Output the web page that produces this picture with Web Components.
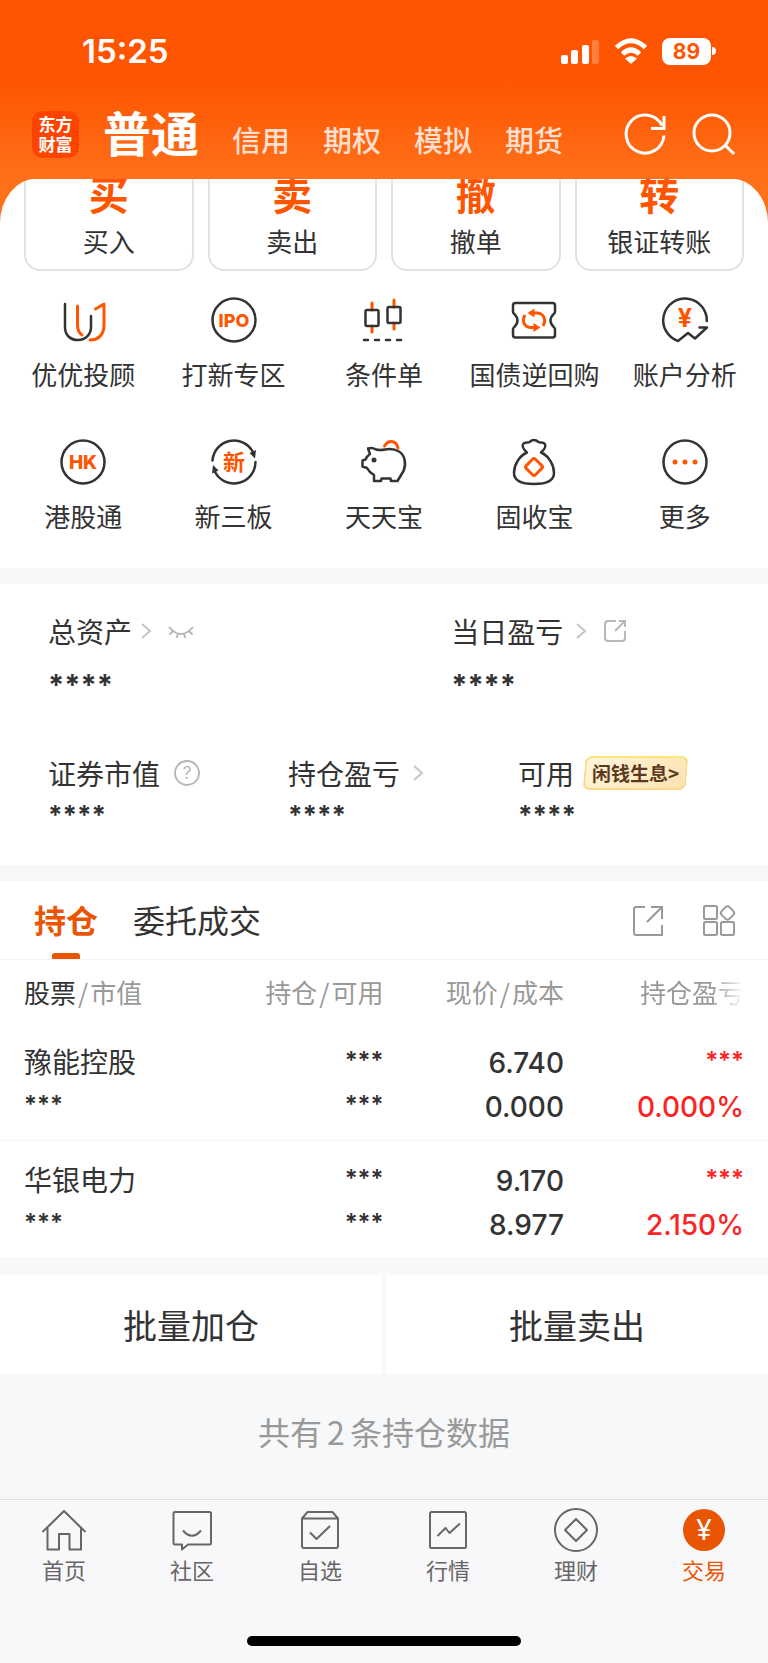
<!DOCTYPE html>
<html lang="zh-CN">
<head>
<meta charset="utf-8">
<meta name="viewport" content="width=device-width, initial-scale=1">
<title>交易</title>
<style>
  :root {
    --brand: #ff5500;
    --accent: #ea5504;
    --ink: #333333;
    --muted: #999999;
    --rise: #fb2323;
    --band: #f6f8fa;
    --line: #f5f5f7;
    --num: Inter, "Noto Sans CJK SC", sans-serif;
  }
  body {
    margin: 0;
    background: var(--band);
    color: var(--ink);
    font-family: "Noto Sans CJK SC", "Noto Sans", sans-serif;
  }
</style>
</head>
<body>
<trade-app></trade-app>

<script>
const ICONS = {
  refresh: [44, `<g fill="none" stroke="currentColor" stroke-width="3"><path d="M39 12.500A19 19 0 1 0 41 22.500" /><path d="M41 3V15.500H28" /></g>`],
  search: [44, `<g fill="none" stroke="currentColor" stroke-width="3"><circle cx="20" cy="20" r="18"/><path d="M33 32L42 41"/></g>`],
  signal: [40, `<g fill="currentColor"><rect x="1" y="24" width="7" height="9" rx="2"/><rect x="11" y="19" width="7" height="14" rx="2"/><rect x="22" y="14" width="7" height="19" rx="2"/><rect x="32" y="9" width="7" height="24" rx="2" opacity=".25"/></g>`],
  wifi: [34, `<g fill="none" stroke="currentColor" stroke-width="5"><path d="M2.500 13.500Q17 0 31.500 13.500"/><path d="M8.500 20Q17 12 25.500 20"/></g><path d="M17 30L11 24.500Q17 19.500 23 24.500Z" fill="currentColor"/>`],
  youyou: [48, `<g class="d"><path d="M6 8V31C6 39 11 44 19 44S32 38 32 31V20"/></g><g class="o"><path d="M18.500 10V29Q18.500 36 23 39"/><path d="M36.500 13L45 8V29C45 38 40 44 31 44"/></g>`],
  ipo: [48, `<circle class="d" cx="24" cy="24" r="21.500"/><text x="24" y="31" font-size="18" font-weight="800">IPO</text>`],
  candle: [48, `<g transform="translate(-2 0)"><g class="o"><path d="M14 7V14M14 30V36M36 4V11M36 27V33"/></g><g class="d"><rect x="7.500" y="14" width="13" height="16" rx="1.500"/><rect x="29.500" y="11" width="13" height="16" rx="1.500"/><path d="M6 44H10M17 44H21M28 44H32M39 44H43"/></g></g>`],
  ticket: [48, `<path class="d" d="M5.500 7H42.500Q45 7 45 9.500V16C45 18 40.500 19 40.500 24.500S45 31 45 33V39Q45 41.500 42.500 41.500H5.500Q3 41.500 3 39V33C3 31 7.500 30 7.500 24.500S3 18 3 16V9.500Q3 7 5.500 7Z"/><g class="o"><path d="M14.500 20C11.500 26 15 31.500 21 31.500H25"/><path d="M33.500 29C36.500 23 33 17 27 17H23"/></g><g fill="#ff5500"><path d="M17.500 17L24.500 12.500V21.500Z"/><path d="M30.500 31.500L23.500 27V36Z"/></g>`],
  analysis: [48, `<path class="d" d="M45.800 25A21.800 21.800 0 1 0 17 45L27 37L34 42.500L46 31.500H38.500"/><text x="24" y="31" font-size="25" font-weight="700">¥</text>`],
  hk: [48, `<circle class="d" cx="24" cy="24" r="21.500"/><text x="24" y="31" font-size="19" font-weight="800">HK</text>`],
  xin: [48, `<g class="d"><path d="M2.500 22.500A21.500 21.500 0 0 1 43 14"/><path d="M45.500 24A21.500 21.500 0 0 1 5 34"/></g><g fill="#333"><path d="M39.500 15L46 12L45 20.500Z"/><path d="M8.500 32.500L2 35.500L3 27Z"/></g><text x="24" y="32" font-size="22" font-weight="700">新</text>`],
  piggy: [48, `<g transform="translate(-1 0)"><path class="d" d="M9 10.500Q13 9 17 11.500Q21 12.500 26 11.500Q34 10 40 13.500C46 17 47.500 26 44.500 33L38.500 43H32L31.500 40.500H22.500L22 43H15V37Q10 34 8 30L3.500 28.500V22.500L6.500 21.500Q8 18 11 16Z"/><path class="o" d="M25.500 8C29 2 37 1.500 39 10"/><circle cx="15" cy="22" r="2.500" fill="#333"/></g>`],
  bag: [48, `<path class="d" d="M17 14.500C14 12 11.500 8 13.500 5.500C15 3.500 18 5 19.500 4Q24 0 28.500 4C30 5 33 3.500 34.500 5.500C36.500 8 34 12 31 14.500C39 18 44 27 44 35C44 43 37 46 24 46S4 43 4 35C4 27 9 18 17 14.500Z"/><rect class="o" x="17.500" y="22.500" width="13" height="13" rx="2" transform="rotate(45 24 29)"/>`],
  more: [48, `<circle class="d" cx="24" cy="24" r="21.500"/><g fill="#ff5500"><circle cx="14" cy="24" r="2.500"/><circle cx="24" cy="24" r="2.500"/><circle cx="34" cy="24" r="2.500"/></g>`],
  chevron: [16, `<path d="M4 1L12 8L4 15" fill="none" stroke="#c4c4c4" stroke-width="2"/>`],
  eye: [26, `<path d="M1 9Q13 23 25 9M5 13L1.500 16.500M10 16L8.500 20M16 16L17.500 20M21 13L24.500 16.500" fill="none" stroke="#b5b5b5" stroke-width="1.800"/>`],
  help: [26, `<circle cx="13" cy="13" r="12" fill="none" stroke="#b5b5b5" stroke-width="1.800"/><text x="13" y="19" font-size="17" style="fill:#b5b5b5">?</text>`],
  share: [24, `<g fill="none" stroke="#b8b8b8" stroke-width="2"><path d="M13 2H5Q2 2 2 5V19Q2 22 5 22H19Q22 22 22 19V12"/><path d="M12 12L22 2M16 2H22V8"/></g>`],
  open: [32, `<g fill="none" stroke="#999" stroke-width="2"><path d="M13 2H4Q2 2 2 4V28Q2 30 4 30H30V20"/><path d="M15 17L30 2M19 2H30V14"/></g>`],
  apps: [34, `<g fill="none" stroke="#999" stroke-width="2"><rect x="2" y="2" width="13" height="13" rx="1.500"/><rect x="2" y="18" width="13" height="13" rx="1.500"/><rect x="19" y="18" width="13" height="13" rx="1.500"/><rect x="20" y="3.500" width="11" height="11" rx="3" transform="rotate(45 25.500 9)"/></g>`],
  home: [44, `<g class="t"><path d="M.5 24L22 3L43.500 24"/><path d="M5.500 20V41.500H17V26H27.500V41.500H39V20"/></g>`],
  chat: [44, `<g class="t"><path d="M5 4H39.500Q41 4 41 5.500V35Q41 36.500 39.500 36.500H18L12 41.500V36.500H5Q3.500 36.500 3.500 35V5.500Q3.500 4 5 4Z"/><path d="M13 22.500Q22 33 31 22.500"/></g>`],
  pick: [44, `<g class="t"><path d="M4 10.500L9.500 4H34.500L40 10.500V38Q40 40 38 40H6Q4 40 4 38ZM4 10.500H40"/><path d="M12 24.500L18.500 31L32 18"/></g>`],
  quote: [44, `<g class="t"><rect x="4" y="4" width="36" height="36" rx="1.500"/><path d="M11.500 28L19.500 20L23.500 25L34 15.500"/></g>`],
  wealth: [44, `<g class="t"><circle cx="22" cy="22" r="21"/><path d="M22 11L33 22L22 33L11 22Z"/></g>`],
  trade: [44, `<circle cx="22" cy="22" r="21" fill="#ea5504"/><text x="22" y="32" font-size="28" style="fill:#fff">¥</text>`],
};

class TradeIcon extends HTMLElement {
  constructor() {
    super();
    this.attachShadow({ mode: 'open' });
  }
  connectedCallback() {
    const [size, body] = ICONS[this.getAttribute('name')];
    this.shadowRoot.innerHTML = `
      <style>
        :host { display: inline-flex; flex: none; }
        svg { display: block; overflow: visible; }
        .d, .o, .t { fill: none; stroke-linejoin: round; }
        .d { stroke: #333; stroke-width: 2.500; stroke-linecap: round; }
        .o { stroke: #ff5500; stroke-width: 3; stroke-linecap: round; }
        .t { stroke: #666; stroke-width: 2; }
        text { fill: #ff5500; text-anchor: middle; font-family: Inter, "Noto Sans CJK SC", sans-serif; }
      </style>
      <svg width="${size}" height="${size}" viewBox="0 0 ${size} ${size}" aria-hidden="true">${body}</svg>
    `;
  }
}
customElements.define('trade-icon', TradeIcon);

class StatusBar extends HTMLElement {
  constructor() {
    super();
    this.attachShadow({ mode: 'open' });
    this.shadowRoot.innerHTML = `
      <style>
        :host { display: flex; align-items: center; justify-content: space-between; height: 100px; padding: 2px 52px 0 82px; box-sizing: border-box; color: #fff; font-family: var(--num); }
        time { font-size: 33px; line-height: 40px; font-weight: 600; }
        .right { display: flex; align-items: center; gap: 14px; }
        .battery { display: flex; align-items: center; gap: 1px; }
        .level { width: 49px; border-radius: 8px; background: #fff; color: var(--brand); font-size: 21px; line-height: 27px; font-weight: 700; text-align: center; }
        .tip { width: 4px; height: 8px; border-radius: 0 4px 4px 0; background: #fff; }
      </style>
      <time>15:25</time>
      <div class="right">
        <trade-icon name="signal"></trade-icon>
        <trade-icon name="wifi"></trade-icon>
        <div class="battery"><span class="level">89</span><span class="tip"></span></div>
      </div>
    `;
  }
}
customElements.define('status-bar', StatusBar);

class TopNav extends HTMLElement {
  constructor() {
    super();
    this.attachShadow({ mode: 'open' });
    this.shadowRoot.innerHTML = `
      <style>
        :host { display: flex; align-items: center; height: 79px; padding: 0 32px 10px; box-sizing: border-box; color: #fff; }
        .logo { width: 47px; padding: 3px 0 4px; margin-right: 24px; box-sizing: border-box; border-radius: 11px; background: #ff4400; font-size: 17px; line-height: 20px; font-weight: 700; text-align: center; }
        nav { display: flex; align-items: baseline; gap: 33px; flex: 1; }
        a { color: #ffdfcf; text-decoration: none; font-size: 29px; line-height: 64px; font-weight: 500; }
        a[aria-current] { color: #fff; font-size: 48px; font-weight: 700; }
        button { display: flex; margin: 0 0 0 25px; padding: 0; border: 0; background: none; color: inherit; }
      </style>
      <div class="logo">东方<br>财富</div>
      <nav>
        <a href="#normal" aria-current="page">普通</a>
        <a href="#credit">信用</a>
        <a href="#option">期权</a>
        <a href="#demo">模拟</a>
        <a href="#future">期货</a>
      </nav>
      <button type="button" aria-label="刷新"><trade-icon name="refresh"></trade-icon></button>
      <button type="button" aria-label="搜索"><trade-icon name="search"></trade-icon></button>
    `;
  }
}
customElements.define('top-nav', TopNav);

class QuickCard extends HTMLElement {
  constructor() {
    super();
    this.attachShadow({ mode: 'open' });
    this.shadowRoot.innerHTML = `
      <style>
        :host { display: block; }
        button { display: block; width: 100%; padding: 12px 0; border: 2px solid #e2e2e2; border-radius: 16px; background: #fff; color: inherit; font-family: inherit; font-size: 26px; line-height: 32px; }
        b { display: block; padding-bottom: 8px; color: var(--brand); font-size: 40px; line-height: 48px; font-weight: 700; }
      </style>
      <button type="button"><b><slot name="mark"></slot></b><slot></slot></button>
    `;
  }
}
customElements.define('quick-card', QuickCard);

class FuncItem extends HTMLElement {
  constructor() {
    super();
    this.attachShadow({ mode: 'open' });
  }
  connectedCallback() {
    this.shadowRoot.innerHTML = `
      <style>
        :host { display: block; }
        a { display: flex; flex-direction: column; align-items: center; gap: 14px; color: inherit; text-decoration: none; font-size: 26px; line-height: 32px; white-space: nowrap; }
      </style>
      <a href="#${this.getAttribute('icon')}"><trade-icon name="${this.getAttribute('icon')}"></trade-icon><slot></slot></a>
    `;
  }
}
customElements.define('func-item', FuncItem);

class AssetStat extends HTMLElement {
  constructor() {
    super();
    this.attachShadow({ mode: 'open' });
    this.shadowRoot.innerHTML = `
      <style>
        :host { display: block; }
        .label { display: flex; align-items: center; gap: 6px; font-size: 28px; line-height: 40px; white-space: nowrap; }
        .value { margin-top: 2px; font-family: var(--num); font-size: 26px; line-height: 40px; font-weight: 700; }
        :host([large]) .value { margin-top: 14px; font-size: 29px; }
      </style>
      <div class="label"><slot></slot></div>
      <div class="value"><slot name="value"></slot></div>
    `;
  }
}
customElements.define('asset-stat', AssetStat);

class InterestBadge extends HTMLElement {
  constructor() {
    super();
    this.attachShadow({ mode: 'open' });
    this.shadowRoot.innerHTML = `
      <style>
        :host { display: block; margin-left: 4px; }
        a { position: relative; z-index: 0; display: flex; align-items: center; height: 34px; padding: 0 8px; box-sizing: border-box; color: #5c3921; text-decoration: none; font-size: 19px; line-height: 30px; font-weight: 700; }
        a::before { content: ""; position: absolute; inset: 0; z-index: -1; border: 2px solid #fcd98a; border-top-color: #fbe678; border-radius: 7px; background: linear-gradient(135deg, #fff5dc, #fde2b0); transform: skewX(-5deg); }
      </style>
      <a href="#interest"><slot></slot></a>
    `;
  }
}
customElements.define('interest-badge', InterestBadge);

class AssetPanel extends HTMLElement {
  constructor() {
    super();
    this.attachShadow({ mode: 'open' });
    this.shadowRoot.innerHTML = `
      <style>
        :host { display: block; padding: 27px 0 30px 48px; background: #fff; }
        .row { display: grid; grid-template-columns: 24fr 23fr 25fr; }
        .top { grid-template-columns: 56fr 44fr; margin-bottom: 48px; }
        button { display: flex; margin: 0 0 0 8px; padding: 0; border: 0; background: none; }
        .gap { margin-left: 4px; }
      </style>
      <div class="row top">
        <asset-stat large>总资产<trade-icon name="chevron"></trade-icon>
          <button type="button" aria-label="显示金额"><trade-icon name="eye"></trade-icon></button>
          <span slot="value">****</span></asset-stat>
        <asset-stat large>当日盈亏<trade-icon class="gap" name="chevron"></trade-icon>
          <button type="button" aria-label="分享"><trade-icon name="share"></trade-icon></button>
          <span slot="value">****</span></asset-stat>
      </div>
      <div class="row">
        <asset-stat>证券市值<button type="button" aria-label="说明"><trade-icon name="help"></trade-icon></button>
          <span slot="value">****</span></asset-stat>
        <asset-stat>持仓盈亏<trade-icon class="gap" name="chevron"></trade-icon>
          <span slot="value">****</span></asset-stat>
        <asset-stat>可用<interest-badge>闲钱生息&gt;</interest-badge>
          <span slot="value">****</span></asset-stat>
      </div>
    `;
  }
}
customElements.define('asset-panel', AssetPanel);

class HoldingTabs extends HTMLElement {
  constructor() {
    super();
    this.attachShadow({ mode: 'open' });
    this._onClick = this._onClick.bind(this);
    this.shadowRoot.innerHTML = `
      <style>
        :host { display: flex; align-items: center; padding: 0 32px 0 34px; border-bottom: 1px solid var(--line); background: #fff; }
        .tabs { display: flex; gap: 35px; flex: 1; }
        button { margin: 0; padding: 0; border: 0; background: none; color: var(--ink); font-family: inherit; }
        button[role="tab"] { position: relative; padding-bottom: 2px; font-size: 32px; line-height: 76px; }
        button[aria-selected="true"] { color: var(--accent); font-weight: 700; }
        button[aria-selected="true"]::after { content: ""; position: absolute; left: 50%; bottom: 0; width: 28px; height: 6px; margin-left: -14px; border-radius: 3px 3px 0 0; background: var(--accent); }
        .tool { display: flex; margin-left: 38px; padding-top: 2px; }
      </style>
      <div class="tabs" role="tablist">
        <button type="button" role="tab" aria-selected="true">持仓</button>
        <button type="button" role="tab" aria-selected="false">委托成交</button>
      </div>
      <button class="tool" type="button" aria-label="分享持仓"><trade-icon name="open"></trade-icon></button>
      <button class="tool" type="button" aria-label="更多功能"><trade-icon name="apps"></trade-icon></button>
    `;
  }
  connectedCallback() { this.shadowRoot.addEventListener('click', this._onClick); }
  disconnectedCallback() { this.shadowRoot.removeEventListener('click', this._onClick); }
  _onClick(e) {
    const btn = e.target.closest('button[role="tab"]');
    if (!btn) return;
    this.shadowRoot.querySelectorAll('button[role="tab"]').forEach((t) => {
      t.setAttribute('aria-selected', t === btn ? 'true' : 'false');
    });
  }
}
customElements.define('holding-tabs', HoldingTabs);

const HOLDINGS = [
  { name: '豫能控股', price: '6.740', cost: '0.000', rate: '0.000%' },
  { name: '华银电力', price: '9.170', cost: '8.977', rate: '2.150%' },
];

class HoldingTable extends HTMLElement {
  constructor() {
    super();
    this.attachShadow({ mode: 'open' });
  }
  connectedCallback() {
    const rows = HOLDINGS.map((h) => `
      <tr>
        <td><span>${h.name}</span><span class="mask">***</span></td>
        <td><span class="mask">***</span><span class="mask">***</span></td>
        <td><span class="num">${h.price}</span><span class="num">${h.cost}</span></td>
        <td class="rise"><span class="mask">***</span><span class="num">${h.rate}</span></td>
      </tr>`).join('');
    this.shadowRoot.innerHTML = `
      <style>
        :host { display: block; background: #fff; }
        table { width: 100%; border-collapse: collapse; table-layout: fixed; }
        th { height: 63px; padding: 0; color: var(--muted); font-size: 26px; line-height: 40px; font-weight: 400; text-align: right; white-space: nowrap; }
        th em { color: var(--ink); font-style: normal; }
        th i { margin: 0 2px; font-style: normal; }
        th:first-child, td:first-child { padding-left: 24px; text-align: left; }
        th:last-child, td:last-child { padding-right: 24px; }
        th:last-child span { -webkit-mask-image: linear-gradient(90deg, #000 70%, transparent); mask-image: linear-gradient(90deg, #000 70%, transparent); }
        td { padding: 17px 0 12px; border-bottom: 1px solid var(--line); text-align: right; font-size: 28px; line-height: 42px; }
        td span { display: block; height: 44px; }
        .num, .mask { font-family: var(--num); font-weight: 600; }
        .num { line-height: 46px; font-weight: 500; }
        .mask { font-size: 24px; }
        .rise { color: var(--rise); }
        .c1 { width: 203px; }
        .c4 { width: 204px; }
      </style>
      <table>
        <colgroup><col class="c1"><col><col><col class="c4"></colgroup>
        <thead><tr><th><em>股票</em><i>/</i>市值</th><th>持仓<i>/</i>可用</th><th>现价<i>/</i>成本</th><th><span>持仓盈亏</span></th></tr></thead>
        <tbody>${rows}</tbody>
      </table>
    `;
  }
}
customElements.define('holding-table', HoldingTable);

class BatchBar extends HTMLElement {
  constructor() {
    super();
    this.attachShadow({ mode: 'open' });
    this.shadowRoot.innerHTML = `
      <style>
        :host { display: grid; grid-template-columns: 1fr 1fr; gap: 4px; }
        button { margin: 0; padding: 0; border: 0; background: #fff; color: inherit; font-family: inherit; font-size: 34px; line-height: 99px; }
      </style>
      <button type="button">批量加仓</button>
      <button type="button">批量卖出</button>
    `;
  }
}
customElements.define('batch-bar', BatchBar);

class TabBar extends HTMLElement {
  constructor() {
    super();
    this.attachShadow({ mode: 'open' });
    this.shadowRoot.innerHTML = `
      <style>
        :host { display: block; padding-bottom: 17px; border-top: 1px solid #dedee0; background: #f8f8fa; }
        nav { display: grid; grid-template-columns: repeat(6, 1fr); padding: 8px 0 53px; }
        a { display: flex; flex-direction: column; align-items: center; gap: 3px; color: #666; text-decoration: none; font-size: 22px; line-height: 28px; }
        a[aria-current] { color: var(--accent); }
        .home { width: 274px; height: 10px; margin: 0 auto; border-radius: 5px; background: #000; }
      </style>
      <nav>
        <a href="#home"><trade-icon name="home"></trade-icon>首页</a>
        <a href="#chat"><trade-icon name="chat"></trade-icon>社区</a>
        <a href="#pick"><trade-icon name="pick"></trade-icon>自选</a>
        <a href="#quote"><trade-icon name="quote"></trade-icon>行情</a>
        <a href="#wealth"><trade-icon name="wealth"></trade-icon>理财</a>
        <a href="#trade" aria-current="page"><trade-icon name="trade"></trade-icon>交易</a>
      </nav>
      <div class="home"></div>
    `;
  }
}
customElements.define('tab-bar', TabBar);

class TradeApp extends HTMLElement {
  constructor() {
    super();
    this.attachShadow({ mode: 'open' });
    this.shadowRoot.innerHTML = `
      <style>
        :host { display: flex; flex-direction: column; min-height: 100vh; }
        header { padding-bottom: 44px; background: linear-gradient(#ff5500 80px, #ff701a 179px); }
        .sheet { margin-top: -44px; padding-bottom: 36px; border-radius: 36px 36px 0 0 / 44px 44px 0 0; overflow: hidden; background: #fff; }
        .cards { display: grid; grid-template-columns: repeat(4, 1fr); gap: 14px; margin-top: -24px; padding: 0 24px; }
        .funcs { display: grid; grid-template-columns: repeat(5, 1fr); row-gap: 48px; padding: 25px 8px 0; }
        asset-panel, holding-tabs, batch-bar { margin-top: 16px; }
        .count { flex: 1; margin: 0; padding: 37px 0 46px; color: var(--muted); font-size: 32px; line-height: 40px; text-align: center; }
        .count span { margin: 0 5px; }
      </style>
      <header>
        <status-bar></status-bar>
        <top-nav></top-nav>
      </header>
      <section class="sheet">
        <div class="cards">
          <quick-card><span slot="mark">买</span>买入</quick-card>
          <quick-card><span slot="mark">卖</span>卖出</quick-card>
          <quick-card><span slot="mark">撤</span>撤单</quick-card>
          <quick-card><span slot="mark">转</span>银证转账</quick-card>
        </div>
        <div class="funcs">
          <func-item icon="youyou">优优投顾</func-item>
          <func-item icon="ipo">打新专区</func-item>
          <func-item icon="candle">条件单</func-item>
          <func-item icon="ticket">国债逆回购</func-item>
          <func-item icon="analysis">账户分析</func-item>
          <func-item icon="hk">港股通</func-item>
          <func-item icon="xin">新三板</func-item>
          <func-item icon="piggy">天天宝</func-item>
          <func-item icon="bag">固收宝</func-item>
          <func-item icon="more">更多</func-item>
        </div>
      </section>
      <asset-panel></asset-panel>
      <holding-tabs></holding-tabs>
      <holding-table></holding-table>
      <batch-bar></batch-bar>
      <p class="count">共有<span>2</span>条持仓数据</p>
      <tab-bar></tab-bar>
    `;
  }
}
customElements.define('trade-app', TradeApp);
</script>
</body>
</html>
